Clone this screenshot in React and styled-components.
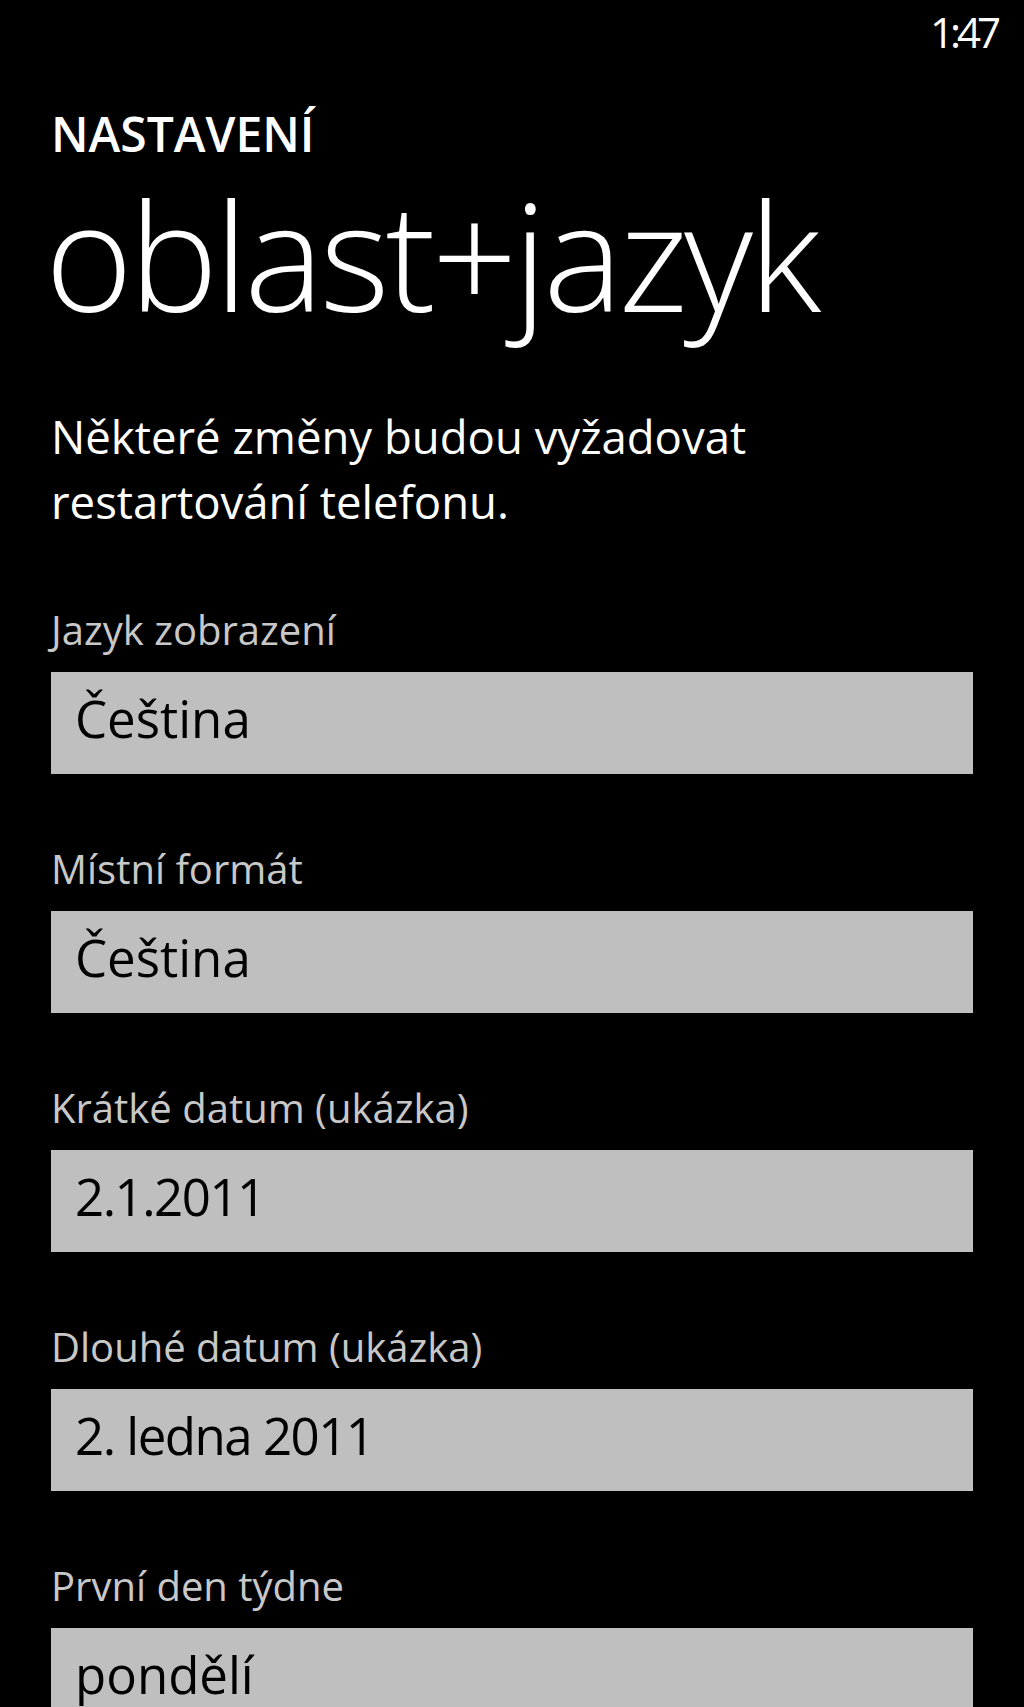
import styled, { createGlobalStyle } from "styled-components";

const GlobalStyle = createGlobalStyle`
  html, body {
    margin: 0;
    padding: 0;
    background: #000000;
  }
  body {
    font-family: "Open Sans", "Noto Sans", sans-serif;
    color: #ffffff;
  }
`;

const fields = [
  { label: "Jazyk zobrazení", value: "Čeština" },
  { label: "Místní formát", value: "Čeština" },
  { label: "Krátké datum (ukázka)", value: "2.1.2011", numeric: true },
  { label: "Dlouhé datum (ukázka)", value: "2. ledna 2011", numeric: true },
  { label: "První den týdne", value: "pondělí" },
];

export default function App() {
  return (
    <>
      <GlobalStyle />
      <Screen>
        <StatusBar>
          <Clock>1:47</Clock>
        </StatusBar>
        <Content>
          <AppTitle>NASTAVENÍ</AppTitle>
          <PageTitle>oblast+jazyk</PageTitle>
          <Notice>
            Některé změny budou vyžadovat
            <br />
            restartování telefonu.
          </Notice>
          <FieldList>
            {fields.map((f) => (
              <Field key={f.label}>
                <FieldLabel>{f.label}</FieldLabel>
                <Picker $numeric={f.numeric}>{f.value}</Picker>
              </Field>
            ))}
          </FieldList>
        </Content>
      </Screen>
    </>
  );
}

const Screen = styled.div`
  width: 1024px;
  min-height: 1707px;
  background: #000000;
  overflow: hidden;
`;

const StatusBar = styled.div`
  display: flex;
  justify-content: flex-end;
  height: 64px;
  padding-right: 27px;
`;

const Clock = styled.span`
  font-size: 42px;
  line-height: 64px;
  letter-spacing: -4px;
  color: #ffffff;
`;

const Content = styled.div`
  display: flex;
  flex-direction: column;
  padding: 0 51px;
`;

const AppTitle = styled.h2`
  margin: 42px 0 0 0;
  font-size: 48px;
  line-height: 56px;
  font-weight: 600;
  color: #ffffff;
`;

const PageTitle = styled.h1`
  margin: 12px 0 0 -6px;
  font-size: 150px;
  line-height: 160px;
  font-weight: 300;
  letter-spacing: -4px;
  color: #ffffff;
`;

const Notice = styled.p`
  margin: 70px 0 0 0;
  font-size: 45.5px;
  line-height: 65px;
  color: #ffffff;
`;

const FieldList = styled.div`
  display: flex;
  flex-direction: column;
  gap: 69px;
  margin-top: 70px;
`;

const Field = styled.div`
  display: flex;
  flex-direction: column;
  gap: 16px;
`;

const FieldLabel = styled.label`
  font-size: 40px;
  line-height: 52px;
  color: #c8c8c8;
`;

const Picker = styled.div`
  height: 92px;
  padding: 0 24px 10px 24px;
  background: #bfbfbf;
  color: #000000;
  font-size: 51px;
  line-height: 92px;
  letter-spacing: ${(p) => (p.$numeric ? "-1.5px" : "0")};
`;
